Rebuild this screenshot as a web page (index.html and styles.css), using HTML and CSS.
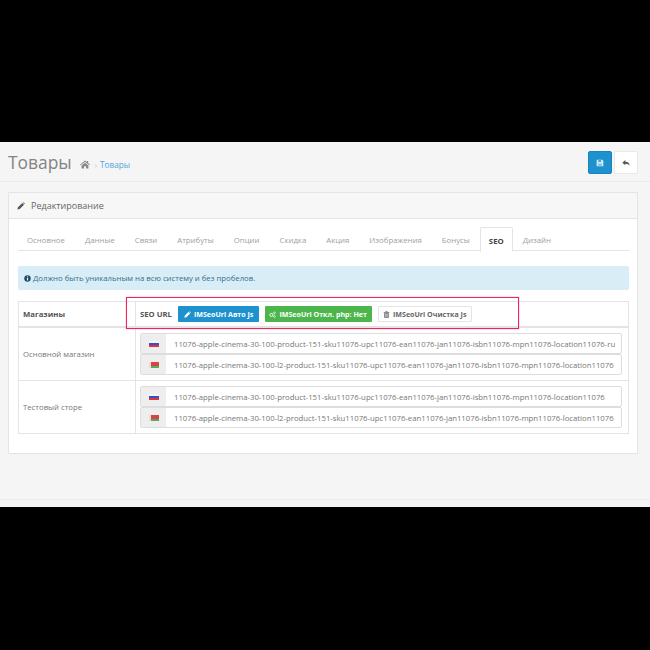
FILE: index.html
```html
<!DOCTYPE html>
<html lang="ru">
<head>
  <meta charset="UTF-8">
  <title>Товары</title>
  <link rel="stylesheet" href="styles.css">
</head>
<body>

  <div class="screen">

    <div class="page-header">
      <h1>Товары</h1>
      <div class="breadcrumb">
        <svg class="home-icon" viewBox="0 0 16 14"><path d="M8 0.5 L11 3 V1.5 H13 V4.7 L16 7.3 L15 8.3 L8 2.5 L1 8.3 L0 7.3 Z M2.5 8.6 L8 4 L13.5 8.6 V13.5 H9.6 V9.6 H6.4 V13.5 H2.5 Z"/></svg>
        <span class="crumb-sep">›</span>
        <a class="crumb-link">Товары</a>
      </div>
      <div class="header-actions">
        <button class="icon-btn save-btn">
          <svg viewBox="0 0 12 12"><path fill="#d5e9f6" d="M1 1 H9.5 L11 2.5 V11 H1 Z"/><rect x="3.5" y="1.8" width="4" height="2.4" fill="#1e91cf"/><rect x="3" y="7" width="6" height="3" fill="#7dbde2"/></svg>
        </button>
        <button class="icon-btn back-btn">
          <svg viewBox="0 0 12 10"><path fill="#555" d="M5 0.5 V3 C9 3 11.5 5 11.5 9.5 C10.5 7 8.5 6 5 6 V8.5 L0.5 4.5 Z"/></svg>
        </button>
      </div>
    </div>

    <div class="panel">
      <div class="panel-heading">
        <svg class="pencil" viewBox="0 0 10 10"><path fill="#555" d="M0.5 9.5 L1.2 6.6 L6.6 1.2 L8.8 3.4 L3.4 8.8 Z M7.3 0.6 L8 0.2 L9.8 2 L9.4 2.7 Z"/></svg>
        Редактирование
      </div>
      <div class="panel-body">

        <ul class="tabs">
          <li>Основное</li>
          <li>Данные</li>
          <li>Связи</li>
          <li>Атрибуты</li>
          <li>Опции</li>
          <li>Скидка</li>
          <li>Акция</li>
          <li>Изображения</li>
          <li>Бонусы</li>
          <li class="active">SEO</li>
          <li>Дизайн</li>
        </ul>

        <div class="alert">
          <svg class="info-icon" viewBox="0 0 10 10"><circle cx="5" cy="5" r="4.6" fill="#1f4f68"/><rect x="4.2" y="4.2" width="1.7" height="3.6" fill="#d9edf7"/><rect x="4.2" y="2" width="1.7" height="1.4" fill="#d9edf7"/></svg>
          Должно быть уникальным на всю систему и без пробелов.
        </div>

        <div class="seo-table">
          <div class="head-row">
            <div class="store-cell head-label">Магазины</div>
            <div class="url-cell head-tools">
              <strong class="seo-label">SEO URL</strong>
              <button class="btn btn-blue">
                <svg viewBox="0 0 10 10"><path fill="#fff" d="M0.5 9.5 L1.2 6.6 L6.6 1.2 L8.8 3.4 L3.4 8.8 Z M7.3 0.6 L8 0.2 L9.8 2 L9.4 2.7 Z"/></svg>
                IMSeoUrl Авто Js
              </button>
              <button class="btn btn-green">
                <svg viewBox="0 0 10 10"><circle cx="3.4" cy="5.6" r="2.2" fill="none" stroke="#fff" stroke-width="1.3"/><circle cx="7.8" cy="2.6" r="1.3" fill="none" stroke="#fff" stroke-width="1"/><circle cx="7.8" cy="7.8" r="1.3" fill="none" stroke="#fff" stroke-width="1"/></svg>
                IMSeoUrl Откл. php: Нет
              </button>
              <button class="btn btn-white">
                <svg viewBox="0 0 10 10"><path fill="#666" d="M3.5 0.5 H6.5 V1.5 H9 V2.5 H1 V1.5 H3.5 Z M1.8 3.2 H8.2 V9.5 H1.8 Z"/><path stroke="#fff" stroke-width="0.7" d="M3.6 4.2 V8.5 M5 4.2 V8.5 M6.4 4.2 V8.5"/></svg>
                IMSeoUrl Очистка Js
              </button>
            </div>
          </div>

          <div class="store-row">
            <div class="store-cell">Основной магазин</div>
            <div class="url-cell url-list">
              <div class="url-input">
                <span class="flag-box"><i class="flag flag-ru"></i></span>
                <span class="url-text">11076-apple-cinema-30-100-product-151-sku11076-upc11076-ean11076-jan11076-isbn11076-mpn11076-location11076-ru</span>
              </div>
              <div class="url-input">
                <span class="flag-box"><i class="flag flag-by"></i></span>
                <span class="url-text">11076-apple-cinema-30-100-l2-product-151-sku11076-upc11076-ean11076-jan11076-isbn11076-mpn11076-location11076</span>
              </div>
            </div>
          </div>

          <div class="store-row">
            <div class="store-cell">Тестовый сторе</div>
            <div class="url-cell url-list">
              <div class="url-input">
                <span class="flag-box"><i class="flag flag-ru"></i></span>
                <span class="url-text">11076-apple-cinema-30-100-product-151-sku11076-upc11076-ean11076-jan11076-isbn11076-mpn11076-location11076</span>
              </div>
              <div class="url-input">
                <span class="flag-box"><i class="flag flag-by"></i></span>
                <span class="url-text">11076-apple-cinema-30-100-l2-product-151-sku11076-upc11076-ean11076-jan11076-isbn11076-mpn11076-location11076</span>
              </div>
            </div>
          </div>

          <div class="red-frame"></div>
        </div>

      </div>
    </div>

    <div class="page-footer"></div>

  </div>

</body>
</html>
```

FILE: styles.css
```css
html, body {
  margin: 0;
  height: 650px;
  overflow: hidden;
  background-color: #000;
}

body {
  padding-top: 142px;
  box-sizing: border-box;
  font-family: "Open Sans", sans-serif;
  font-size: 8px;
  color: #666;
}

.screen {
  height: 365px;
  box-sizing: border-box;
  padding: 0 12px 0 8px;
  background-color: #f5f5f5;
}

.page-header {
  display: flex;
  align-items: center;
  height: 39px;
  margin: 0 -12px 10px -8px;
  padding: 0 12px 0 8px;
  border-bottom: 1px solid #ebebeb;
}

h1 {
  margin: 0;
  font-size: 17.4px;
  font-weight: 400;
  color: #848484;
}

.breadcrumb {
  display: flex;
  align-items: center;
  margin: 5px 0 0 8px;
}

.home-icon {
  width: 10px;
  height: 9px;
  fill: #888;
}

.crumb-sep {
  margin: 0 3px 0 5px;
  color: #bbb;
  font-size: 8px;
}

.crumb-link {
  color: #4ea5dc;
  font-size: 8.2px;
}

.header-actions {
  display: flex;
  gap: 2px;
  margin-left: auto;
  align-self: flex-start;
  margin-top: 9px;
}

.icon-btn {
  width: 24px;
  height: 23px;
  display: flex;
  align-items: center;
  justify-content: center;
  padding: 0;
  border-radius: 2px;
  border: 1px solid #e9e9e9;
  background-color: #fff;
}

.icon-btn svg {
  width: 8px;
  height: 8px;
}

.save-btn {
  background-color: #1e91cf;
  border-color: #1b82ba;
}

.panel {
  height: 262px;
  box-sizing: border-box;
  background-color: #fff;
  border: 1px solid #e4e4e4;
  border-radius: 1px;
}

.panel-heading {
  display: flex;
  align-items: center;
  gap: 6px;
  height: 25px;
  padding-left: 8px;
  background-color: #f7f7f7;
  border-bottom: 1px solid #e4e4e4;
  font-size: 9px;
  color: #666;
}

.pencil {
  width: 8px;
  height: 8px;
}

.panel-body {
  padding: 8px 8px 0 9px;
}

.tabs {
  display: flex;
  height: 23px;
  margin: 0 0 15px 0;
  padding: 0;
  list-style: none;
  border-bottom: 1px solid #e4e4e4;
}

.tabs li {
  height: 15px;
  padding: 8px 10px 0 10px;
  font-size: 7.8px;
  color: #a0a0a0;
}

.tabs li:first-child {
  padding-left: 9px;
}

.tabs li.active {
  padding: 8px 8px 0 8px;
  margin-bottom: -1px;
  height: 15px;
  background-color: #fff;
  border: 1px solid #e4e4e4;
  border-bottom-color: #fff;
  border-radius: 2px 2px 0 0;
  font-weight: 700;
  color: #444;
}

.alert {
  display: flex;
  align-items: center;
  gap: 2px;
  height: 24px;
  margin-bottom: 11px;
  padding-left: 6px;
  background-color: #d9edf7;
  border-radius: 2px;
  font-size: 7.75px;
  color: #31708f;
}

.info-icon {
  width: 7px;
  height: 7px;
}

.seo-table {
  position: relative;
  border: 1px solid #e4e4e4;
  border-bottom: none;
}

.head-row,
.store-row {
  display: flex;
  border-bottom: 1px solid #e4e4e4;
}

.head-row {
  height: 24px;
  border-bottom-width: 2px;
}

.store-row {
  height: 52px;
}

.store-cell {
  width: 117px;
  box-sizing: border-box;
  flex: none;
  display: flex;
  align-items: center;
  padding-left: 4px;
  border-right: 1px solid #e4e4e4;
  font-size: 7.75px;
  color: #777;
}

.head-label {
  font-weight: 700;
  color: #555;
}

.url-cell {
  flex: 1;
  min-width: 0;
}

.head-tools {
  display: flex;
  align-items: center;
  padding-left: 4px;
}

.seo-label {
  margin-right: 6px;
  font-size: 7.7px;
  color: #555;
}

.btn {
  display: flex;
  align-items: center;
  gap: 3px;
  height: 16px;
  margin-right: 6px;
  padding: 0 5px;
  border: 1px solid transparent;
  border-radius: 1px;
  font-family: inherit;
  font-size: 7.1px;
  font-weight: 700;
  white-space: nowrap;
  color: #fff;
}

.btn svg {
  width: 7px;
  height: 7px;
}

.btn-blue {
  background-color: #1e91cf;
}

.btn-green {
  padding: 0 4px 0 3px;
  background-color: #4cb64c;
}

.btn-white {
  padding-left: 4px;
  background-color: #fff;
  border-color: #e4e4e4;
  color: #666;
}

.url-list {
  display: flex;
  flex-direction: column;
  justify-content: center;
  padding: 0 6px 0 4px;
}

.url-input {
  display: flex;
  height: 21px;
  box-sizing: border-box;
  background-color: #fff;
  border: 1px solid #ddd;
  border-radius: 2px;
  overflow: hidden;
}

.flag-box {
  width: 25px;
  flex: none;
  display: flex;
  align-items: center;
  justify-content: center;
  background-color: #eee;
}

.flag {
  display: block;
  width: 10px;
  height: 6px;
}

.flag-ru {
  background: linear-gradient(#f4f4f8 33%, #3550c8 33%, #3550c8 66%, #e0333f 66%);
}

.flag-by {
  background: linear-gradient(90deg, #f0d8d8 15%, transparent 15%), linear-gradient(#d8434a 62%, #5aa85a 62%);
}

.url-text {
  padding-left: 8px;
  align-self: center;
  font-size: 7.75px;
  white-space: nowrap;
  color: #777;
}

.red-frame {
  position: absolute;
  left: 107px;
  top: -5px;
  width: 391px;
  height: 30px;
  border: 1px solid #f0245c;
  box-shadow: 0 0 1px rgba(240, 36, 92, 0.6);
}

.page-footer {
  margin: 45px -12px 0 -8px;
  border-top: 1px solid #ebebeb;
}
```
